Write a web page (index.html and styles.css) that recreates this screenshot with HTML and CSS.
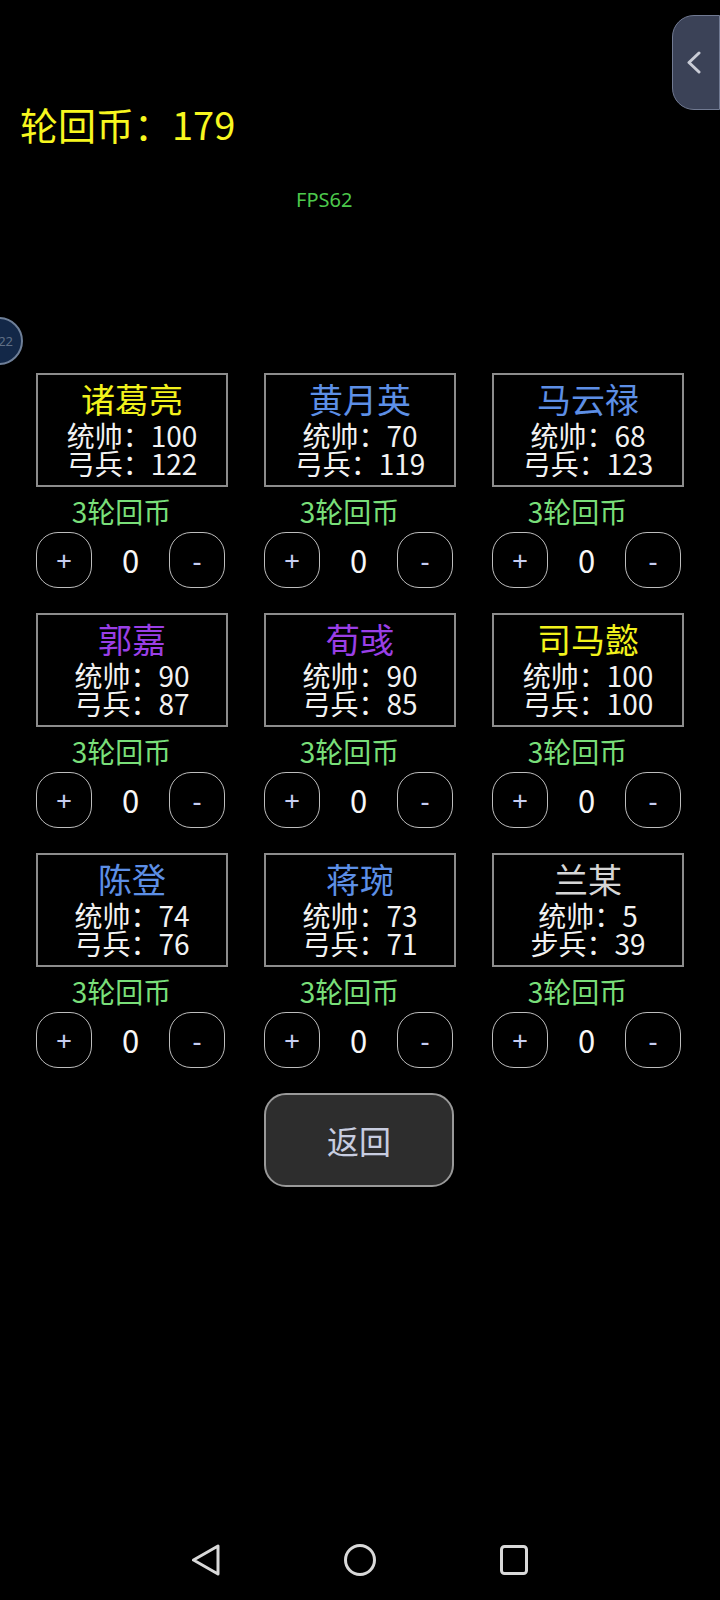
FILE: index.html
```html
<!DOCTYPE html>
<html lang="zh-CN">
<head>
<meta charset="utf-8">
<title>轮回币</title>
<link rel="stylesheet" href="styles.css">
</head>
<body>
<div class="screen">
  <div class="side-tab">
    <svg class="chev" width="16" height="24" viewBox="0 0 16 24"><polyline points="12,2 2,11.5 12,21" fill="none" stroke="#c9ccd6" stroke-width="3" stroke-linecap="round" stroke-linejoin="round"/></svg>
  </div>
  <div class="float-ball"><span>22</span></div>

  <div class="coins">轮回币：179</div>
  <div class="fps">FPS62</div>

  <div class="grid">
    <div class="card">
      <div class="box"><div class="name yellow">诸葛亮</div><div class="stats">统帅：100<br>弓兵：122</div></div>
      <div class="price">3轮回币</div>
      <div class="ctrl"><div class="btn">+</div><div class="count">0</div><div class="btn minus">-</div></div>
    </div>
    <div class="card">
      <div class="box"><div class="name blue">黄月英</div><div class="stats">统帅：70<br>弓兵：119</div></div>
      <div class="price">3轮回币</div>
      <div class="ctrl"><div class="btn">+</div><div class="count">0</div><div class="btn minus">-</div></div>
    </div>
    <div class="card">
      <div class="box"><div class="name blue">马云禄</div><div class="stats">统帅：68<br>弓兵：123</div></div>
      <div class="price">3轮回币</div>
      <div class="ctrl"><div class="btn">+</div><div class="count">0</div><div class="btn minus">-</div></div>
    </div>
    <div class="card">
      <div class="box"><div class="name purple">郭嘉</div><div class="stats">统帅：90<br>弓兵：87</div></div>
      <div class="price">3轮回币</div>
      <div class="ctrl"><div class="btn">+</div><div class="count">0</div><div class="btn minus">-</div></div>
    </div>
    <div class="card">
      <div class="box"><div class="name purple">荀彧</div><div class="stats">统帅：90<br>弓兵：85</div></div>
      <div class="price">3轮回币</div>
      <div class="ctrl"><div class="btn">+</div><div class="count">0</div><div class="btn minus">-</div></div>
    </div>
    <div class="card">
      <div class="box"><div class="name yellow">司马懿</div><div class="stats">统帅：100<br>弓兵：100</div></div>
      <div class="price">3轮回币</div>
      <div class="ctrl"><div class="btn">+</div><div class="count">0</div><div class="btn minus">-</div></div>
    </div>
    <div class="card">
      <div class="box"><div class="name blue">陈登</div><div class="stats">统帅：74<br>弓兵：76</div></div>
      <div class="price">3轮回币</div>
      <div class="ctrl"><div class="btn">+</div><div class="count">0</div><div class="btn minus">-</div></div>
    </div>
    <div class="card">
      <div class="box"><div class="name blue">蒋琬</div><div class="stats">统帅：73<br>弓兵：71</div></div>
      <div class="price">3轮回币</div>
      <div class="ctrl"><div class="btn">+</div><div class="count">0</div><div class="btn minus">-</div></div>
    </div>
    <div class="card">
      <div class="box"><div class="name white">兰某</div><div class="stats">统帅：5<br>步兵：39</div></div>
      <div class="price">3轮回币</div>
      <div class="ctrl"><div class="btn">+</div><div class="count">0</div><div class="btn minus">-</div></div>
    </div>
  </div>

  <div class="back-row"><div class="back-btn">返回</div></div>

  <div class="navbar">
    <svg width="32" height="32" viewBox="0 0 32 32"><polygon points="3.5,16 28,2 28,30" fill="none" stroke="#d9d9d9" stroke-width="3" stroke-linejoin="round"/></svg>
    <svg width="32" height="32" viewBox="0 0 32 32"><circle cx="16" cy="16" r="14.5" fill="none" stroke="#d9d9d9" stroke-width="3"/></svg>
    <svg width="32" height="32" viewBox="0 0 32 32"><rect x="3.5" y="2.5" width="25" height="27" rx="3" fill="none" stroke="#d9d9d9" stroke-width="3"/></svg>
  </div>
</div>
</body>
</html>
```
FILE: styles.css
```css
* { box-sizing: border-box; }
html, body { margin: 0; padding: 0; background: #000; }
body {
  font-family: "Noto Sans CJK SC", "Noto Sans", sans-serif;
  color: #f2f2f2;
}
.screen {
  position: relative;
  width: 720px;
  height: 1600px;
  overflow: hidden;
  display: flex;
  flex-direction: column;
  padding-bottom: 24px;
}
.side-tab {
  position: absolute;
  top: 15px;
  right: 0;
  width: 48px;
  height: 95px;
  background: #3b4257;
  border: 1.5px solid #717a92;
  border-radius: 22px 0 0 22px;
  display: flex;
  align-items: center;
  justify-content: center;
  padding-right: 2px;
}
.float-ball {
  position: absolute;
  left: -25px;
  top: 317px;
  width: 48px;
  height: 48px;
  border-radius: 50%;
  background: #132848;
  border: 2px solid #6e7f98;
  display: flex;
  align-items: center;
  justify-content: flex-end;
  padding-right: 8px;
}
.float-ball span {
  font-family: "Noto Sans", sans-serif;
  font-size: 13px;
  color: #5f6f86;
  line-height: 1;
}
.coins {
  margin-top: 102px;
  padding-left: 20px;
  font-size: 38px;
  line-height: 44px;
  color: #f7f71f;
}
.fps {
  margin-top: 42px;
  margin-left: 296px;
  font-family: "Noto Sans", sans-serif;
  font-size: 20px;
  line-height: 24px;
  color: #4cc94c;
}
.grid {
  margin-top: 161px;
  display: grid;
  grid-template-columns: repeat(3, 192px);
  column-gap: 36px;
  row-gap: 25px;
  justify-content: center;
}
.card {
  display: flex;
  flex-direction: column;
}
.box {
  border: 2px solid #8c8c8c;
  padding: 2px 0 8px;
  text-align: center;
}
.name {
  font-size: 34px;
  line-height: 44px;
}
.yellow { color: #f2f21c; }
.blue { color: #5d8fe6; }
.purple { color: #9a3fe6; }
.white { color: #d6d6d6; }
.stats {
  font-size: 28px;
  line-height: 28px;
  color: #f2f2f2;
}
.price {
  margin-top: 8px;
  padding-right: 21px;
  text-align: center;
  font-size: 28px;
  line-height: 32px;
  color: #79df79;
}
.ctrl {
  margin-top: 5px;
  width: 189px;
  height: 56px;
  display: grid;
  grid-template-columns: 56px 1fr 56px;
  align-items: center;
}
.btn {
  height: 56px;
  border: 1.5px solid #bdbdbd;
  border-radius: 22px;
  display: flex;
  align-items: center;
  justify-content: center;
  font-family: "Noto Sans", sans-serif;
  font-size: 28px;
  line-height: 1;
  color: #c6cdf0;
}
.count {
  text-align: center;
  font-size: 31px;
  line-height: 56px;
  color: #f7f7f7;
}
.back-row {
  margin-top: 25px;
  display: flex;
  justify-content: center;
}
.back-btn {
  width: 190px;
  height: 94px;
  margin-left: -2px;
  background: #2d2d2d;
  border: 2px solid #999;
  border-radius: 22px;
  display: flex;
  align-items: center;
  justify-content: center;
  font-size: 32px;
  color: #c8cde0;
}
.navbar {
  margin-top: auto;
  height: 32px;
  display: flex;
  justify-content: center;
  gap: 122px;
}
```
